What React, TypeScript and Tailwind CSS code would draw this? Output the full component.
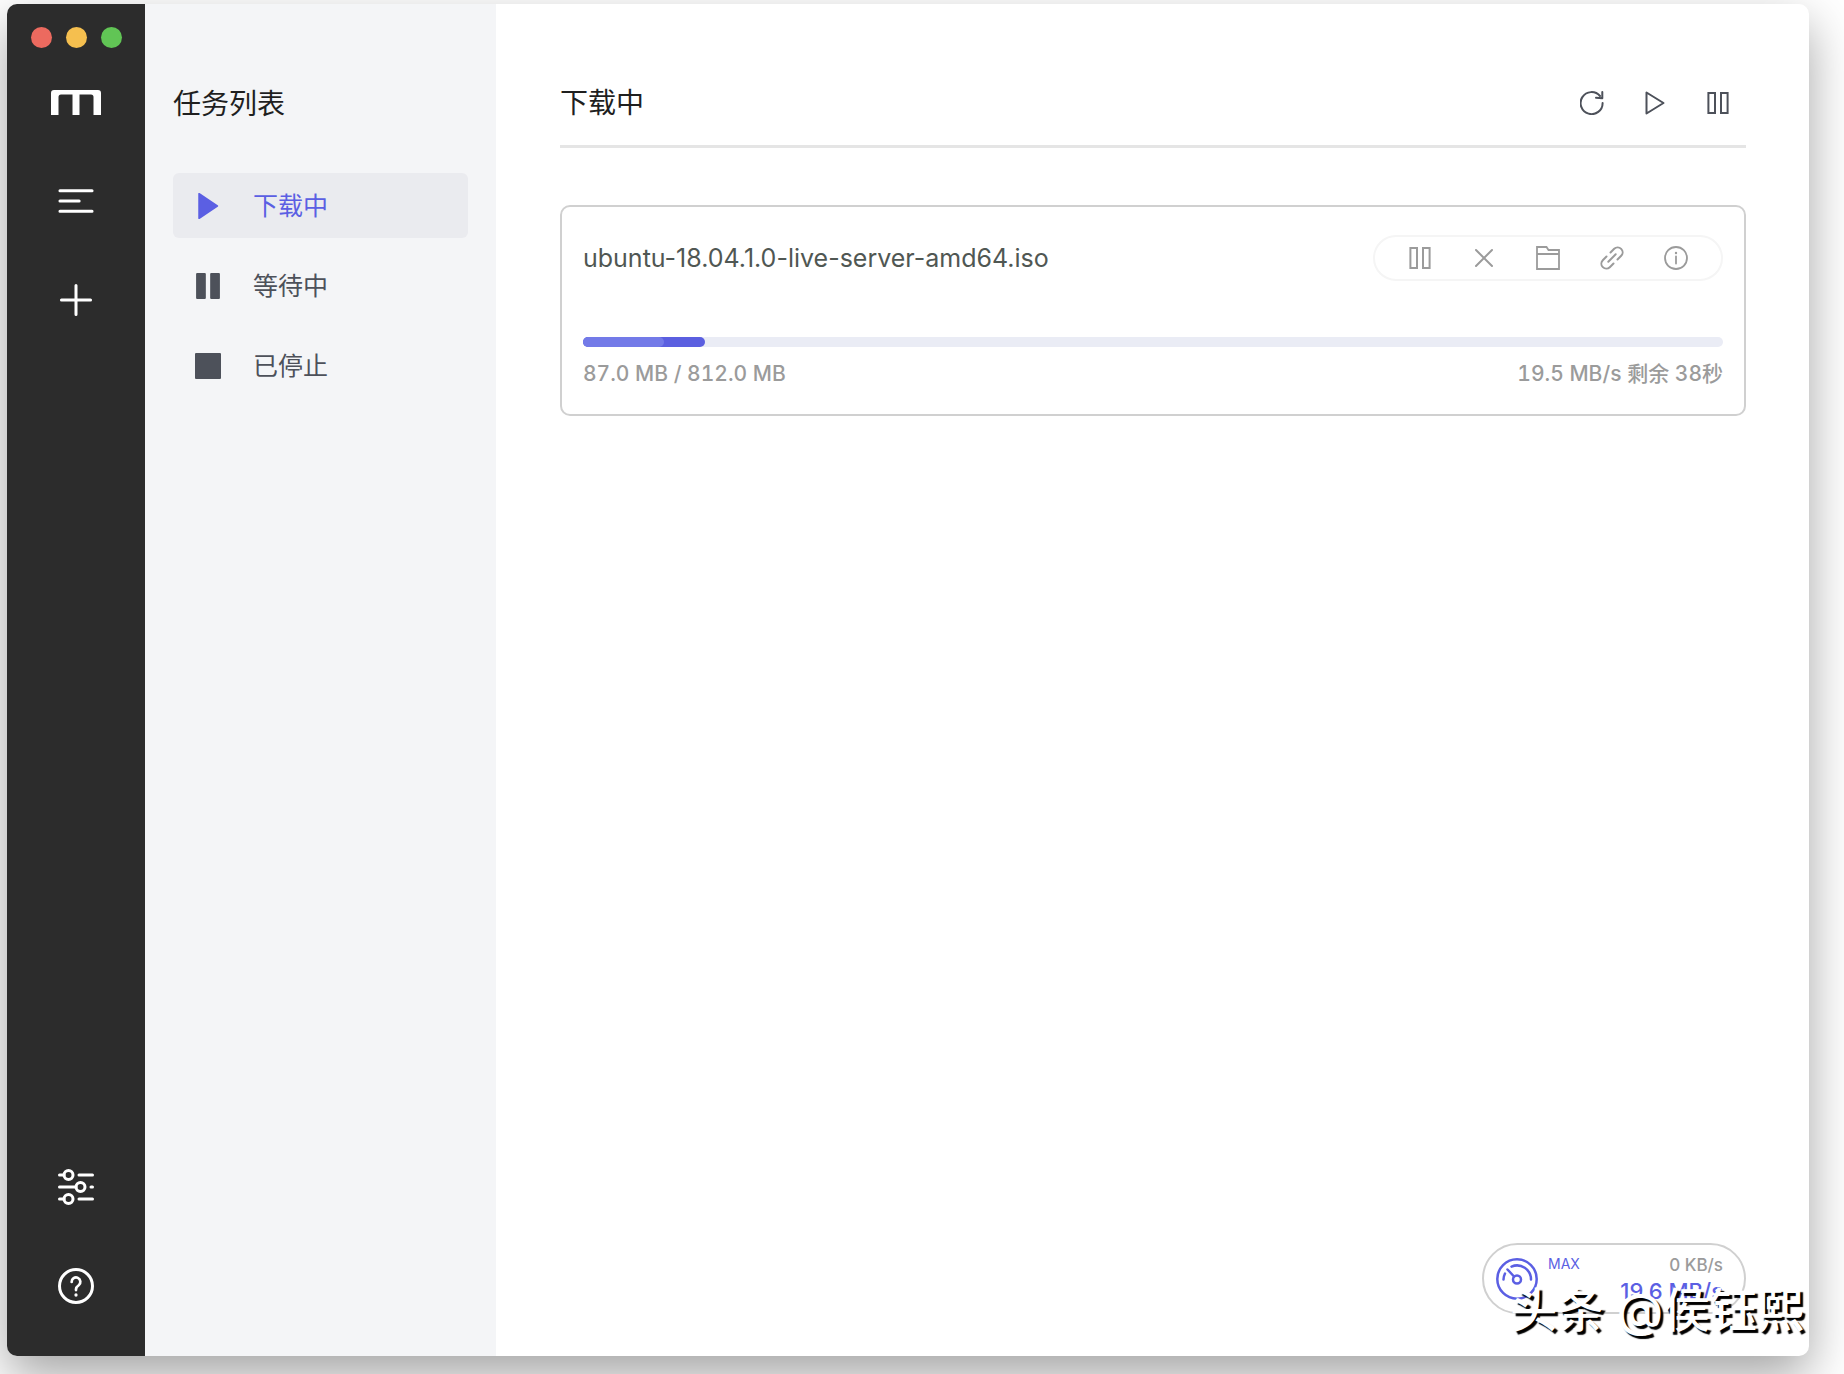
import { useState } from 'react';
import type { ReactNode } from 'react';

const tasks = [
  {
    name: 'ubuntu-18.04.1.0-live-server-amd64.iso',
    done: '87.0 MB',
    total: '812.0 MB',
    speed: '19.5 MB/s',
    remaining: '剩余 38秒',
    percent: 10.7,
  },
];

const Icon = ({ children, className }: { children: ReactNode; className: string }) => (
  <svg
    viewBox="0 0 24 24"
    fill="none"
    stroke="currentColor"
    strokeLinecap="round"
    strokeLinejoin="round"
    className={className}
    aria-hidden="true"
  >
    {children}
  </svg>
);

const PauseOutline = () => (
  <Icon className="size-6">
    <path strokeWidth="2" strokeLinejoin="miter" d="M2.400 2H9v20H2.400zM15 2h6.600v20H15z" />
  </Icon>
);

const AsideButton = ({ label, children }: { label: string; children: ReactNode }) => (
  <button type="button" aria-label={label} className="flex size-9 items-center justify-center text-white">
    {children}
  </button>
);

const Aside = () => (
  <aside className="flex w-[138px] shrink-0 flex-col items-center bg-[#2c2c2c] pt-[23px] pb-[52px]">
    <div className="flex gap-[14px]">
      <button type="button" aria-label="关闭" className="size-[21px] rounded-full bg-[#ec6a5f]" />
      <button type="button" aria-label="最小化" className="size-[21px] rounded-full bg-[#f5bf4f]" />
      <button type="button" aria-label="最大化" className="size-[21px] rounded-full bg-[#61c555]" />
    </div>
    <svg viewBox="0 0 50 25" className="mt-[42px] h-[25px] w-[50px] text-white" fill="currentColor" aria-hidden="true">
      <path d="M0 25V3a3 3 0 0 1 3-3h44a3 3 0 0 1 3 3v22h-7.500V7a2.500 2.500 0 0 0-2.500-2.500H28.500V25h-7V4.500H10A2.500 2.500 0 0 0 7.500 7v18z" />
    </svg>
    <nav className="mt-[68px] flex flex-col gap-[63px]">
      <AsideButton label="任务列表">
        <Icon className="size-9">
          <path strokeWidth="2" d="M1.300 5.200h21.400M1.300 12h12.800M1.300 18.800h21.400" />
        </Icon>
      </AsideButton>
      <AsideButton label="新建任务">
        <Icon className="size-9">
          <path strokeWidth="2" d="M2.300 12h19.400M12 2.300v19.400" />
        </Icon>
      </AsideButton>
    </nav>
    <nav className="mt-auto flex flex-col gap-[63px]">
      <AsideButton label="偏好设置">
        <Icon className="size-9">
          <g strokeWidth="2">
            <circle cx="7" cy="4" r="3" />
            <circle cx="15" cy="12" r="3" />
            <circle cx="7" cy="20" r="3" />
            <path d="M1 4h3M14 4h9M1 12h11M22 12h1M1 20h3M14 20h9" />
          </g>
        </Icon>
      </AsideButton>
      <AsideButton label="帮助">
        <Icon className="size-9">
          <circle cx="12" cy="12" r="11" strokeWidth="2" />
          <path strokeWidth="1.800" d="M9.100 9.300a2.900 2.900 0 1 1 4.700 2.200c-1.100.8-1.800 1.300-1.800 2.600v.6" />
          <circle cx="12" cy="18" r="1.100" fill="currentColor" stroke="none" />
        </Icon>
      </AsideButton>
    </nav>
  </aside>
);

const menu = [
  {
    key: 'active',
    label: '下载中',
    icon: <path d="M3 .8v22.400a.8.8 0 0 0 1.200.7l16.800-11.200a.8.8 0 0 0 0-1.400L4.200.1A.8.8 0 0 0 3 .8z" />,
  },
  {
    key: 'waiting',
    label: '等待中',
    icon: (
      <>
        <rect x="1" width="9" height="24" rx="1" />
        <rect x="14" width="9" height="24" rx="1" />
      </>
    ),
  },
  {
    key: 'stopped',
    label: '已停止',
    icon: <rect width="24" height="24" rx="1" />,
  },
];

const SubNav = ({ current, onChange }: { current: string; onChange: (key: string) => void }) => (
  <nav className="w-[351px] shrink-0 bg-[#f4f5f7] px-7 pt-20">
    <h2 className="text-[28px] leading-10 text-[#1f1f1f]">任务列表</h2>
    <ul className="mt-[49px] flex flex-col gap-[15px]">
      {menu.map((item) => (
        <li key={item.key}>
          <button
            type="button"
            onClick={() => onChange(item.key)}
            className={`flex h-[65px] w-full items-center gap-8 rounded-md pl-[22px] text-[25px] leading-9 ${
              item.key === current ? 'bg-[#eaebef] text-[#5b5fe3]' : 'text-[#4d515a]'
            }`}
          >
            <svg viewBox="0 0 24 24" className="size-[26px]" fill="currentColor" aria-hidden="true">
              {item.icon}
            </svg>
            {item.label}
          </button>
        </li>
      ))}
    </ul>
  </nav>
);

const IconButton = ({ label, children }: { label: string; children: ReactNode }) => (
  <button type="button" aria-label={label} className="flex size-6 items-center justify-center">
    {children}
  </button>
);

const TaskItem = ({ task }: { task: (typeof tasks)[number] }) => (
  <li className="rounded-[10px] border-2 border-[#d0d0d0] px-[21px] pt-7 pb-[26px]">
    <div className="flex items-center justify-between">
      <h3 className="text-[25px] leading-9 text-[#505753]">{task.name}</h3>
      <div className="flex h-[46px] items-center gap-10 rounded-full border-2 border-[#f5f5f5] px-[33px] text-[#9b9b9b]">
        <IconButton label="暂停">
          <PauseOutline />
        </IconButton>
        <IconButton label="删除">
          <Icon className="size-6">
            <path strokeWidth="2" d="M4 4l16 16M20 4L4 20" />
          </Icon>
        </IconButton>
        <IconButton label="打开文件夹">
          <Icon className="size-[26px]">
            <path strokeWidth="1.800" strokeLinejoin="miter" d="M1 23V1h9.500l2 3H23v19zM1 8h22" />
          </Icon>
        </IconButton>
        <IconButton label="复制链接">
          <Icon className="size-6">
            <path
              strokeWidth="2"
              d="M8.300 15.700l7.400-7.400M10.500 6.500l3.700-3.700a4.950 4.950 0 0 1 7 7l-3.700 3.700M13.500 17.500l-3.700 3.700a4.950 4.950 0 0 1-7-7l3.700-3.700"
            />
          </Icon>
        </IconButton>
        <IconButton label="任务详情">
          <Icon className="size-[26px]">
            <circle cx="12" cy="12" r="11" strokeWidth="1.800" />
            <path strokeWidth="1.800" d="M12 10.500v7" />
            <circle cx="12" cy="7" r="1.200" fill="currentColor" stroke="none" />
          </Icon>
        </IconButton>
      </div>
    </div>
    <div className="mt-14 h-[10px] rounded-full bg-[#eaecf5]">
      <div className="h-full rounded-full bg-[#5b5fe0]" style={{ width: `${task.percent}%` }}>
        <div className="h-full w-2/3 rounded-full bg-[#737ae8]" />
      </div>
    </div>
    <div className="mt-[13px] flex justify-between text-[21px] leading-7 font-medium text-[#9b9b9b] tabular-nums">
      <span>
        {task.done} / {task.total}
      </span>
      <span>
        {task.speed} {task.remaining}
      </span>
    </div>
  </li>
);

const Speedometer = () => (
  <div className="flex h-[71px] w-[264px] items-center rounded-full border-2 border-[#d0d0d0] pr-[21px] pl-3">
    <svg
      viewBox="0 0 42 42"
      className="size-[42px] text-[#5b5fe3]"
      fill="none"
      stroke="currentColor"
      strokeWidth="2.500"
      strokeLinecap="round"
      aria-hidden="true"
    >
      <circle cx="21" cy="21" r="19.700" />
      <circle cx="21" cy="21.500" r="4" />
      <path d="M18 18.500l-6.500-7M15.500 8.600a14 14 0 0 1 19.500 13M7.500 21.500a14 14 0 0 1 1.500-6" />
    </svg>
    <span className="mt-[5px] ml-[10px] self-start text-sm leading-7 text-[#5b5fe3]">MAX</span>
    <div className="flex flex-1 flex-col text-right">
      <span className="text-[17px] leading-6 font-medium text-[#9b9b9b]">0 KB/s</span>
      <span className="text-[22px] leading-7 font-medium text-[#5b5fe3]">19.6 MB/s</span>
    </div>
  </div>
);

export default function App() {
  const [current, setCurrent] = useState('active');

  return (
    <div className="relative flex h-screen overflow-hidden bg-white pt-1 pr-[35px] pb-[18px] pl-[7px] font-['Inter','Noto_Sans_CJK_SC',sans-serif]">
      <div className="flex flex-1 overflow-hidden rounded-[10px] bg-white shadow-[0_20px_50px_rgba(0,0,0,0.36)]">
        <Aside />
        <SubNav current={current} onChange={setCurrent} />
        <main className="flex flex-1 flex-col pr-[63px] pb-[42px] pl-16">
          <header className="flex items-center justify-between border-b-[3px] border-[#e5e5e5] pt-[79px] pb-[22px]">
            <h1 className="text-[28px] leading-10 text-[#1f1f1f]">下载中</h1>
            <div className="mr-4 flex gap-[39px] text-[#4d515a]">
              <IconButton label="刷新">
                <Icon className="size-6">
                  <path strokeWidth="2" d="M22.600 12A11 11 0 1 1 20 5M22.300 1v6.300l-6.300-.5" />
                </Icon>
              </IconButton>
              <IconButton label="全部开始">
                <Icon className="size-6">
                  <path strokeWidth="2" d="M3.500 1.500v21L20.500 12z" />
                </Icon>
              </IconButton>
              <IconButton label="全部暂停">
                <PauseOutline />
              </IconButton>
            </div>
          </header>
          <ul className="mt-[57px] flex flex-col">
            {tasks.map((task) => (
              <TaskItem key={task.name} task={task} />
            ))}
          </ul>
          <div className="mt-auto flex justify-end">
            <Speedometer />
          </div>
        </main>
      </div>
      <p className="absolute right-10 bottom-8 text-[47px] leading-[64px] font-medium text-white [text-shadow:3px_3px_1px_#000]">
        头条 @侯钰熙
      </p>
    </div>
  );
}
